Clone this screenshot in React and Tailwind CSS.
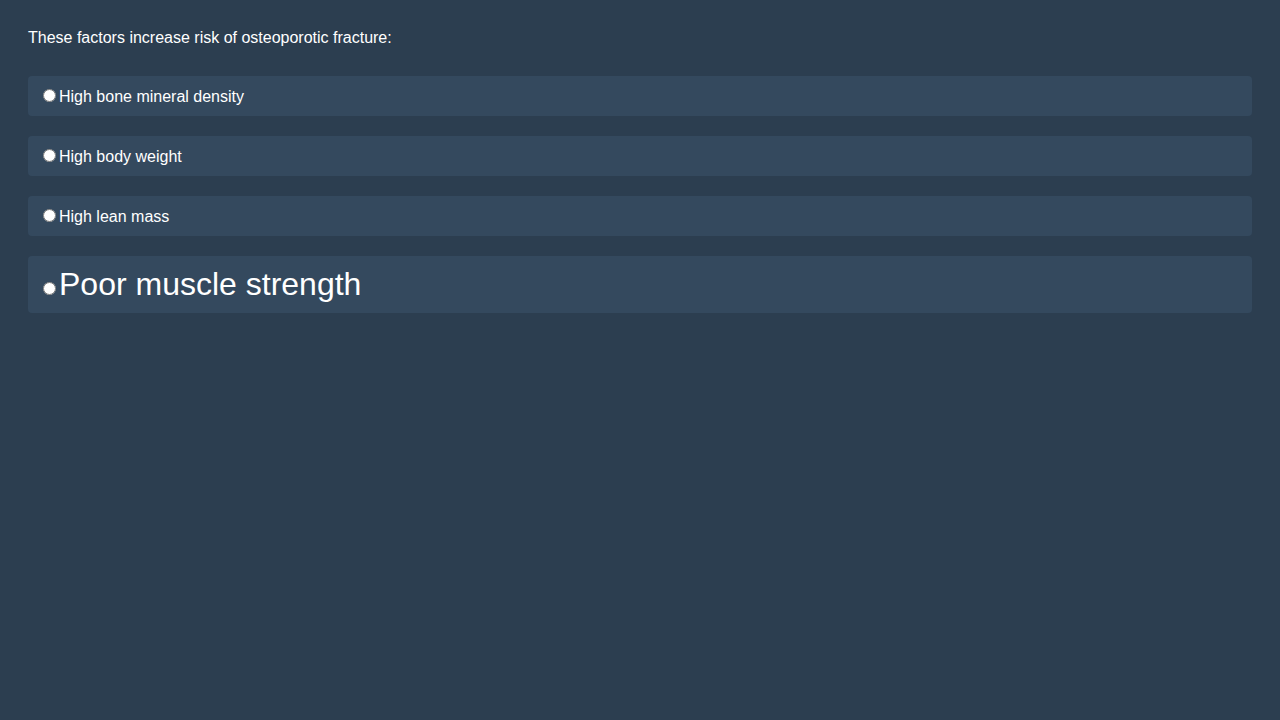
import React from "react";

const options = [
  { id: "a", label: "High bone mineral density" },
  { id: "b", label: "High body weight" },
  { id: "c", label: "High lean mass" },
  { id: "d", label: "Poor muscle strength", big: true },
];

export default function App() {
  return (
    <div className="min-h-screen bg-[#2c3e50] px-[28px] pt-[29px] text-white font-['Liberation_Sans',Arial,sans-serif]">
      <p className="text-base leading-[18px] mb-[29px]">
        These factors increase risk of osteoporotic fracture:
      </p>
      <div className="flex flex-col gap-[20px]">
        {options.map((opt) => (
          <label
            key={opt.id}
            className={`block rounded bg-[#34495e] p-[10px] leading-[normal] ${
              opt.big ? "text-[32px]" : "text-base"
            }`}
          >
            <input
              type="radio"
              name="factor"
              className="m-0 ml-[5px] mr-[3px] mt-[3px] h-[13px] w-[13px] align-baseline"
            />
            {opt.label}
          </label>
        ))}
      </div>
    </div>
  );
}
